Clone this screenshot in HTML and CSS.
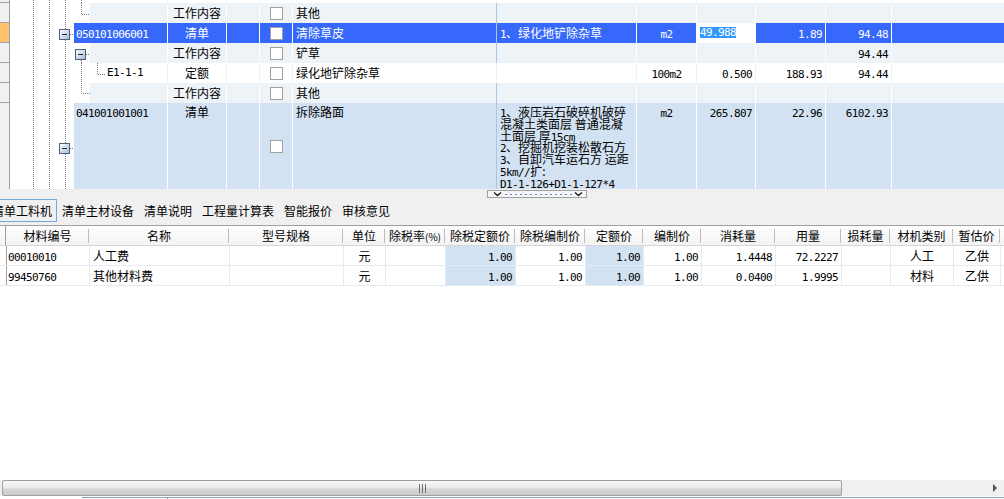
FILE: index.html
```html
<!DOCTYPE html>
<html lang="zh-CN">
<head>
<meta charset="utf-8">
<title>清单工料机</title>
<link rel="stylesheet" href="styles.css">
</head>
<body>
<div class="top">
  <div class="rowhdr">
    <div class="rh rh0"></div>
    <div class="rh"></div>
    <div class="rh rh-cur"></div>
    <div class="rh"></div>
    <div class="rh"></div>
    <div class="rh"></div>
    <div class="rh rh-last"></div>
  </div>
  <svg class="tree" width="64" height="189" viewBox="0 0 64 189">
    <defs>
      <linearGradient id="mg" x1="0" y1="0" x2="1" y2="1">
        <stop offset="0" stop-color="#ffffff"/>
        <stop offset="1" stop-color="#a7b9d6"/>
      </linearGradient>
    </defs>
    <path class="dot" d="M23.5 0V189M39.5 0V189M55.5 0V29M55.5 40V143M55.5 154V189M60 34.5H64M60 148.5H64"/>
    <rect x="49.5" y="29.5" width="10" height="10" fill="url(#mg)" stroke="#4f607e"/>
    <path d="M52 34.5H57" stroke="#1c2540"/>
    <rect x="49.5" y="143.5" width="10" height="10" fill="url(#mg)" stroke="#4f607e"/>
    <path d="M52 148.5H57" stroke="#1c2540"/>
  </svg>
  <div class="grid">
    <div class="row row0 rw">
      <div class="c code tc"><svg width="16" height="3"><path class="dot" d="M7.5 0V3"/></svg></div>
      <div class="c w-type"></div><div class="c w-e"></div><div class="c w-chk"></div>
      <div class="c w-name"></div><div class="c w-desc"></div><div class="c w-unit"></div>
      <div class="c w-qty"></div><div class="c w-price"></div><div class="c w-total"></div><div class="c w-rest"></div>
    </div>
    <div class="row rl">
      <div class="c code tc"><svg width="16" height="20"><path class="dot" d="M7.5 0V11.5H16"/></svg><span class="fill"></span></div>
      <div class="c w-type">工作内容</div><div class="c w-e"></div>
      <div class="c w-chk"><span class="cb"></span></div>
      <div class="c w-name">其他</div><div class="c w-desc"></div><div class="c w-unit"></div>
      <div class="c w-qty"></div><div class="c w-price"></div><div class="c w-total"></div><div class="c w-rest"></div>
    </div>
    <div class="row rs">
      <div class="c code"><span class="n">050101006001</span></div>
      <div class="c w-type">清单</div><div class="c w-e"></div>
      <div class="c w-chk"><span class="cb"></span></div>
      <div class="c w-name">清除草皮</div>
      <div class="c w-desc"><span class="n">1</span>、绿化地铲除杂草</div>
      <div class="c w-unit"><span class="n">m2</span></div>
      <div class="c w-qty qty-edit"><span class="hl n">49.988</span></div>
      <div class="c w-price"><span class="n">1.89</span></div>
      <div class="c w-total"><span class="n">94.48</span></div>
      <div class="c w-rest"></div>
    </div>
    <div class="row rl">
      <div class="c code tc"><svg width="16" height="20"><path class="dot" d="M7.5 17V20M12 11.5H16"/><rect x="1.5" y="6.5" width="10" height="10" fill="url(#mg)" stroke="#4f607e"/><path d="M4 11.5H9" stroke="#1c2540"/></svg><span class="fill"></span></div>
      <div class="c w-type">工作内容</div><div class="c w-e"></div>
      <div class="c w-chk"><span class="cb"></span></div>
      <div class="c w-name">铲草</div><div class="c w-desc"></div><div class="c w-unit"></div>
      <div class="c w-qty"></div><div class="c w-price"></div>
      <div class="c w-total"><span class="n">94.44</span></div><div class="c w-rest"></div>
    </div>
    <div class="row rw">
      <div class="c code tc"><svg width="31" height="20"><path class="dot" d="M7.5 0V20M23.5 0V11.5H31"/></svg><span class="qcode n">E1-1-1</span></div>
      <div class="c w-type">定额</div><div class="c w-e"></div>
      <div class="c w-chk"><span class="cb"></span></div>
      <div class="c w-name">绿化地铲除杂草</div><div class="c w-desc"></div>
      <div class="c w-unit"><span class="n">100m2</span></div>
      <div class="c w-qty"><span class="n">0.500</span></div>
      <div class="c w-price"><span class="n">188.93</span></div>
      <div class="c w-total"><span class="n">94.44</span></div><div class="c w-rest"></div>
    </div>
    <div class="row rl">
      <div class="c code tc"><svg width="16" height="20"><path class="dot" d="M7.5 0V10.5H16"/></svg><span class="fill"></span></div>
      <div class="c w-type">工作内容</div><div class="c w-e"></div>
      <div class="c w-chk"><span class="cb"></span></div>
      <div class="c w-name">其他</div><div class="c w-desc"></div><div class="c w-unit"></div>
      <div class="c w-qty"></div><div class="c w-price"></div><div class="c w-total"></div><div class="c w-rest"></div>
    </div>
    <div class="row row-tall rb">
      <div class="c code"><span class="n">041001001001</span></div>
      <div class="c w-type">清单</div><div class="c w-e"></div>
      <div class="c w-chk"><span class="cb"></span></div>
      <div class="c w-name">拆除路面</div>
      <div class="c w-desc desc"><span class="n">1</span>、液压岩石破碎机破碎<br>混凝土类面层 普通混凝<br>土面层 厚<span class="n">15cm</span><br><span class="n">2</span>、挖掘机挖装松散石方<br><span class="n">3</span>、自卸汽车运石方 运距<br><span class="n">5km//</span>扩:<br><span class="n">D1-1-126+D1-1-127*4</span></div>
      <div class="c w-unit"><span class="n">m2</span></div>
      <div class="c w-qty"><span class="n">265.807</span></div>
      <div class="c w-price"><span class="n">22.96</span></div>
      <div class="c w-total"><span class="n">6102.93</span></div>
      <div class="c w-rest"></div>
    </div>
  </div>
</div>

<div class="mid">
  <svg class="handle" width="100" height="8" viewBox="0 0 100 8">
    <rect x="0.5" y="0.5" width="99" height="7" fill="#f6f6f6" stroke="#a0a0a0"/>
    <path d="M7 2.5L10.5 5.5L14 2.5M88 2.5L91.5 5.5L95 2.5" fill="none" stroke="#202020" stroke-width="1.4"/>
    <path d="M18 4.5H86" stroke="#5a86d6" stroke-dasharray="2 3"/>
  </svg>
</div>

<div class="tabs">
  <div class="tab on">清单工料机</div>
  <div class="tab">清单主材设备</div>
  <div class="tab">清单说明</div>
  <div class="tab">工程量计算表</div>
  <div class="tab">智能报价</div>
  <div class="tab">审核意见</div>
</div>

<div class="g2">
  <div class="hrow">
    <div class="h ind"></div>
    <div class="h k1">材料编号</div>
    <div class="h k2">名称</div>
    <div class="h k3">型号规格</div>
    <div class="h k4">单位</div>
    <div class="h k5">除税率<span class="pct">(%)</span></div>
    <div class="h k6">除税定额价</div>
    <div class="h k7">除税编制价</div>
    <div class="h k8">定额价</div>
    <div class="h k9">编制价</div>
    <div class="h k10">消耗量</div>
    <div class="h k11">用量</div>
    <div class="h k12">损耗量</div>
    <div class="h k13">材机类别</div>
    <div class="h k14">暂估价</div>
    <div class="h kf"></div>
  </div>
  <div class="drow">
    <div class="d ind"></div>
    <div class="d k1 code2"><span class="n">00010010</span></div>
    <div class="d k2">人工费</div>
    <div class="d k3"></div>
    <div class="d k4 ctr">元</div>
    <div class="d k5"></div>
    <div class="d k6 r blue"><span class="n">1.00</span></div>
    <div class="d k7 r"><span class="n">1.00</span></div>
    <div class="d k8 r blue"><span class="n">1.00</span></div>
    <div class="d k9 r"><span class="n">1.00</span></div>
    <div class="d k10 r"><span class="n">1.4448</span></div>
    <div class="d k11 r"><span class="n">72.2227</span></div>
    <div class="d k12"></div>
    <div class="d k13 ctr">人工</div>
    <div class="d k14 ctr">乙供</div>
    <div class="d kf"></div>
  </div>
  <div class="drow">
    <div class="d ind"></div>
    <div class="d k1 code2"><span class="n">99450760</span></div>
    <div class="d k2">其他材料费</div>
    <div class="d k3"></div>
    <div class="d k4 ctr">元</div>
    <div class="d k5"></div>
    <div class="d k6 r blue"><span class="n">1.00</span></div>
    <div class="d k7 r"><span class="n">1.00</span></div>
    <div class="d k8 r blue"><span class="n">1.00</span></div>
    <div class="d k9 r"><span class="n">1.00</span></div>
    <div class="d k10 r"><span class="n">0.0400</span></div>
    <div class="d k11 r"><span class="n">1.9995</span></div>
    <div class="d k12"></div>
    <div class="d k13 ctr">材料</div>
    <div class="d k14 ctr">乙供</div>
    <div class="d kf"></div>
  </div>
</div>

<div class="hs">
  <div class="thumb">
    <svg class="grip" width="7" height="9" viewBox="0 0 7 9"><path d="M0.5 0V9M3.5 0V9M6.5 0V9" stroke="#6e6e6e"/></svg>
  </div>
  <span class="arrow"></span>
</div>

<div class="bot">
  <div class="btab"></div>
  <div class="bline"></div>
</div>
</body>
</html>
```

FILE: styles.css
```css
html, body {
  margin: 0;
  padding: 0;
}
body {
  width: 1004px;
  height: 499px;
  overflow: hidden;
  font-family: "Noto Sans CJK SC", sans-serif;
  font-size: 12px;
  color: #000;
  background: #f0f0f0;
}
.n {
  font-family: "DejaVu Sans Mono", monospace;
  font-size: 11px;
  letter-spacing: -0.6px;
}

/* ---------- top tree grid ---------- */
.top {
  display: flex;
  height: 189px;
  overflow: hidden;
  background: #fff;
}
.rowhdr {
  width: 10px;
  flex: none;
  display: flex;
  flex-direction: column;
  background: #f0f0f0;
  border-right: 1px solid #a0a0a0;
  box-sizing: border-box;
}
.rh {
  height: 20px;
  flex: none;
  box-sizing: border-box;
  border-bottom: 1px solid #a0a0a0;
}
.rh0 { height: 3px; }
.rh-cur { background: #ffc36e; }
.rh-last { flex: 1; border-bottom: 0; }
.tree {
  flex: none;
  display: block;
  background: #fff;
}
.dot {
  fill: none;
  stroke: #7a7a7a;
  stroke-dasharray: 1 1;
}
.grid {
  flex: 1;
  min-width: 0;
  min-height: 0;
  overflow: hidden;
  display: flex;
  flex-direction: column;
}
.row {
  display: flex;
  height: 20px;
  flex: none;
}
.row0 { height: 3px; }
.row-tall {
  flex: 1 1 0;
  height: auto;
  min-height: 0;
}
.c {
  flex: none;
  box-sizing: border-box;
  border-right: 1px solid #fff;
  padding: 0 3px;
  line-height: 20px;
  white-space: nowrap;
  overflow: hidden;
}
.code { width: 94px; padding-left: 2px; }
.w-type { width: 59px; text-align: center; }
.w-e { width: 33px; }
.w-chk {
  width: 33px;
  padding: 0;
  display: flex;
  align-items: center;
  justify-content: center;
}
.w-name { width: 204px; }
.w-desc { width: 140px; }
.w-unit { width: 60px; text-align: center; padding: 0; }
.w-qty { width: 59px; text-align: right; }
.w-price { width: 70px; text-align: right; }
.w-total { width: 66px; text-align: right; }
.w-rest { flex: 1; border-right: 0; }
.row .w-name { border-right-color: #abc5e7; }

.tc {
  display: flex;
  padding: 0;
}
.tc svg { display: block; flex: none; }
.fill { flex: 1; }
.qcode { padding-left: 2px; }

.rw { background: #fff; }
.rw .c { border-right-color: #eef3f8; }
.rl { background: #eef3f8; }
.rl .code { background: #fff; }
.rl .fill { background: #eef3f8; }
.rs { background: #3568fb; color: #fff; }
.rb { background: #d2e2f2; }

.cb {
  width: 13px;
  height: 13px;
  box-sizing: border-box;
  border: 1px solid #a0a0a0;
  background: #fff;
}

.qty-edit {
  background: #fff;
  color: #000;
  text-align: left;
  line-height: 11px;
  padding-top: 2px;
}
.hl {
  display: inline-block;
  height: 11px;
  line-height: 11px;
  background: #3399ff;
  color: #fff;
}

.row-tall .c {
  line-height: 12px;
  padding-top: 3px;
}
.row-tall .w-chk { padding-top: 0; }
.row-tall .desc {
  white-space: normal;
  line-height: 11.75px;
  padding-top: 3px;
}
.row-tall .desc .n { line-height: 0; }

/* ---------- splitter & tabs ---------- */
.mid {
  height: 10px;
  box-sizing: border-box;
  padding: 1px 0 0 487px;
  background: #f0f0f0;
}
.handle { display: block; }
.tabs {
  height: 26px;
  display: flex;
  align-items: flex-start;
  margin-left: -13px;
  background: #f0f0f0;
}
.tab {
  flex: none;
  height: 23px;
  box-sizing: border-box;
  border: 1px solid transparent;
  padding: 0 4px;
  line-height: 21px;
  white-space: nowrap;
}
.tab.on { border-color: #74a9dc; }

/* ---------- bottom grid ---------- */
.g2 {
  height: 255px;
  box-sizing: border-box;
  border-top: 1px solid #a0a0a0;
  background: #fff;
}
.hrow {
  display: flex;
  height: 20px;
  box-sizing: border-box;
  border-bottom: 1px solid #d6d6d6;
  background: linear-gradient(#fefefe, #f3f3f3);
}
.h {
  flex: none;
  box-sizing: border-box;
  text-align: center;
  line-height: 19px;
  white-space: nowrap;
  overflow: hidden;
  background: linear-gradient(#bcbcbc, #bcbcbc) right 0 top 3px / 1px 14px no-repeat;
}
.pct { font-size: 10px; }
.drow {
  display: flex;
  height: 20px;
  box-sizing: border-box;
  border-bottom: 1px solid #e6ebf2;
}
.d {
  flex: none;
  box-sizing: border-box;
  border-right: 1px solid #e6ebf2;
  line-height: 19px;
  padding: 0 3px;
  white-space: nowrap;
  overflow: hidden;
}
.ind {
  width: 6px;
  border-right: 1px solid #a0a0a0;
  background: none;
}
.h.ind { background: none; }
.code2 { padding-left: 1px; }
.k1 { width: 83px; }
.k2 { width: 140px; }
.k3 { width: 114px; }
.k4 { width: 42px; }
.k5 { width: 60px; padding: 0; }
.k6 { width: 70px; }
.k7 { width: 70px; }
.k8 { width: 58px; }
.k9 { width: 58px; }
.k10 { width: 74px; }
.k11 { width: 66px; }
.k12 { width: 49px; }
.k13 { width: 63px; }
.k14 { width: 47px; }
.kf { flex: 1; border-right: 0; background: none; }
.blue { background: #d2e2f2; }
.r { text-align: right; }
.ctr { text-align: center; }

/* ---------- scrollbar ---------- */
.hs {
  height: 16px;
  display: flex;
  align-items: stretch;
  padding-left: 2px;
  background: #f0f0f0;
}
.thumb {
  width: 840px;
  box-sizing: border-box;
  border: 1px solid #a0a0a0;
  border-radius: 2px;
  background: linear-gradient(#f8f8f8 0%, #ececec 45%, #d8d8d8 55%, #cbcbcb 100%);
  display: flex;
  align-items: center;
  justify-content: center;
}
.grip { display: block; }
.arrow {
  margin-left: auto;
  margin-right: 7px;
  align-self: center;
  width: 0;
  height: 0;
  border-left: 4px solid #505050;
  border-top: 4px solid transparent;
  border-bottom: 4px solid transparent;
}
.bot {
  height: 3px;
  box-sizing: border-box;
  padding-top: 1px;
  display: flex;
  background: #fff;
}
.btab {
  margin-left: 82px;
  width: 86px;
  height: 2px;
  box-sizing: border-box;
  border-top: 1px solid #8aa1bd;
  border-right: 1px solid #8aa1bd;
}
.bline {
  flex: 1;
  border-top: 1px solid #8aa1bd;
}
```
